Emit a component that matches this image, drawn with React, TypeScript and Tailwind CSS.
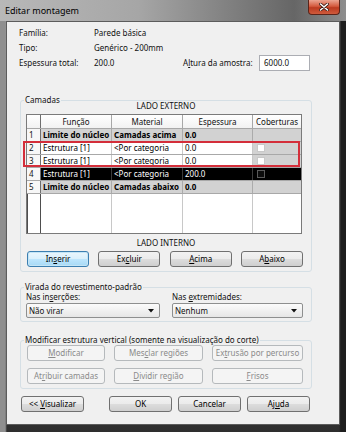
import React from "react";

type BtnProps = { children: React.ReactNode; className?: string; kind?: "normal" | "focus" | "disabled" };

function Btn({ children, className = "", kind = "normal" }: BtnProps) {
  const base = "h-[16px] rounded-[3px] border flex items-center justify-center shrink-0 ";
  const k =
    kind === "focus"
      ? "border-[#3c7fb1] bg-[linear-gradient(#eaf6fd,#d9f0fc_50%,#bee6fd_50%,#a7d9f5)] text-black shadow-[inset_0_0_0_1px_#c4e5f6]"
      : kind === "disabled"
      ? "border-[#b5b9bc] bg-[#f4f4f4] text-[#8a8a8a]"
      : "border-[#707070] bg-[linear-gradient(#f2f2f2,#ebebeb_50%,#dddddd_50%,#cfcfcf)] text-black";
  return <div className={base + k + " " + className}>{children}</div>;
}

type RowKind = "grey" | "white" | "black";

function Row({ n, a, b, c, kind }: { n: string; a: string; b: string; c: string; kind: RowKind }) {
  const cell =
    kind === "grey"
      ? "bg-[#d2d2d2] font-bold text-black border-r border-[#ababab]"
      : kind === "black"
      ? "bg-black text-white border-r border-[#3a3a3a]"
      : "bg-white text-black border-r border-[#c8c8c8]";
  const cob = kind === "black" ? "bg-black" : "bg-[#d2d2d2]";
  return (
    <div className="h-[13px] flex border-b border-[#a8a8a8]">
      <div className="w-[14px] shrink-0 bg-[#f7f7f7] border-r border-[#6e6e6e] pl-[2px] flex items-center">{n}</div>
      <div className={"w-[71px] shrink-0 pl-[2px] flex items-center whitespace-nowrap overflow-hidden " + cell}>{a}</div>
      <div className={"w-[71px] shrink-0 pl-[2px] flex items-center whitespace-nowrap overflow-hidden " + cell}>{b}</div>
      <div className={"w-[70px] shrink-0 pl-[2px] flex items-center whitespace-nowrap overflow-hidden " + cell}>{c}</div>
      <div className={"flex-1 flex items-center pl-[4px] " + cob}>
        {kind === "white" && <div className="w-[8px] h-[8px] bg-white border border-[#c9c9c9]" />}
        {kind === "black" && <div className="w-[8px] h-[8px] bg-[#0c0c0c] border border-[#5a5a5a]" />}
      </div>
    </div>
  );
}

export default function App() {
  return (
    <div className="w-[346px] h-[432px] overflow-hidden flex flex-col bg-[linear-gradient(90deg,#8f8f8f,#8f8f8f_1.5%,transparent_2%,transparent_98%,#1e1e1e_98.5%),linear-gradient(180deg,#a4a4a4,#6e6e6e_55%,#2e2e2e)] [font-family:'Noto_Sans',sans-serif] text-[8px] leading-[10px] text-[#111]">
      {/* title bar */}
      <div className="h-[21px] shrink-0 flex bg-[linear-gradient(90deg,#b8b8b8,#a6a6a6_40%,#7b7b7b_70%,#666666_85%,#8e8e8e)]">
        <div className="flex-1 pl-[5px] pt-[5px] text-[9px] leading-[11px] text-black">Editar montagem</div>
        <div className="mr-[6px] w-[32px] h-[15px] rounded-b-[4px] border border-t-0 border-[#5b2419] bg-[linear-gradient(#eba491,#d45a3e_45%,#bb3a20_55%,#cf5b3c)] flex items-center justify-center">
          <svg width="10" height="8" viewBox="0 0 10 8">
            <path d="M1.5 1 L8.5 7 M8.5 1 L1.5 7" stroke="#3a1a12" strokeWidth="3" strokeLinecap="round" />
            <path d="M1.5 1 L8.5 7 M8.5 1 L1.5 7" stroke="#ffffff" strokeWidth="1.6" strokeLinecap="round" />
          </svg>
        </div>
      </div>

      {/* client area */}
      <div className="mx-[6px] h-[404px] shrink-0 bg-[#f0f0f0] border border-[#5c5c5c] flex flex-col">
        {/* info */}
        <div className="mt-[3px] pl-[12px] flex flex-col">
          <div className="h-[15px] flex items-center">
            <span className="w-[75px] shrink-0">Família:</span>
            <span>Parede básica</span>
          </div>
          <div className="h-[15px] flex items-center">
            <span className="w-[75px] shrink-0">Tipo:</span>
            <span>Genérico - 200mm</span>
          </div>
          <div className="h-[15px] flex items-center">
            <span className="w-[75px] shrink-0">Espessura total:</span>
            <span className="w-[89px] shrink-0">200.0</span>
            <span className="w-[76px] shrink-0">
              A<u>l</u>tura da amostra:
            </span>
            <div className="w-[51px] h-[16px] border border-[#abadb3] bg-white pl-[4px] flex items-center">6000.0</div>
          </div>
        </div>

        {/* Camadas */}
        <fieldset className="mt-[25px] ml-[13px] w-[292px] border border-[#d5dfe5] rounded-[3px] pb-[4px]">
          <legend className="ml-[3px] px-[1px] leading-[10px]">Camadas</legend>
          <div className="-mt-[4px] h-[10px] text-center">LADO EXTERNO</div>
          <div className="relative ml-[5px] mt-[3px] w-[276px] h-[120px] border border-[#7a7a7a] bg-white flex flex-col">
            <div className="h-[14px] flex border-b border-[#a8a8a8] bg-[linear-gradient(#ffffff,#f2f2f2)]">
              <div className="w-[14px] shrink-0 border-r border-[#6e6e6e]" />
              <div className="w-[71px] shrink-0 border-r border-[#a8a8a8] flex items-center justify-center">Função</div>
              <div className="w-[71px] shrink-0 border-r border-[#a8a8a8] flex items-center justify-center">Material</div>
              <div className="w-[70px] shrink-0 border-r border-[#a8a8a8] flex items-center justify-center">Espessura</div>
              <div className="flex-1 flex items-center justify-center">Coberturas</div>
            </div>
            <Row n="1" a="Limite do núcleo" b="Camadas acima" c="0.0" kind="grey" />
            <Row n="2" a="Estrutura [1]" b="<Por categoria" c="0.0" kind="white" />
            <Row n="3" a="Estrutura [1]" b="<Por categoria" c="0.0" kind="white" />
            <Row n="4" a="Estrutura [1]" b="<Por categoria" c="200.0" kind="black" />
            <Row n="5" a="Limite do núcleo" b="Camadas abaixo" c="0.0" kind="grey" />
            <div className="flex-1 flex">
              <div className="w-[14px] shrink-0 bg-white border-r border-l border-[#4e4e4e]" />
              <div className="w-[71px] shrink-0 border-r border-[#c8c8c8]" />
              <div className="w-[71px] shrink-0 border-r border-[#c8c8c8]" />
              <div className="w-[70px] shrink-0 border-r border-[#c8c8c8]" />
              <div className="flex-1" />
            </div>
            <div className="absolute left-[-4px] top-[26px] w-[277px] h-[26px] border-2 border-[#d42e3a]" />
          </div>
          <div className="mt-[4px] h-[10px] text-center">LADO INTERNO</div>
          <div className="mt-[3px] ml-[6px] w-[276px] flex justify-between">
            <Btn kind="focus" className="w-[62px]">
              In<u>s</u>erir
            </Btn>
            <Btn className="w-[62px]">
              Ex<u>c</u>luir
            </Btn>
            <Btn className="w-[62px]">
              <u>A</u>cima
            </Btn>
            <Btn className="w-[62px]">
              A<u>b</u>aixo
            </Btn>
          </div>
        </fieldset>

        {/* Virada */}
        <fieldset className="mt-[10px] ml-[13px] w-[292px] border border-[#d5dfe5] rounded-[3px] pb-[3px]">
          <legend className="ml-[3px] px-[1px] leading-[10px]">Virada do revestimento-padrão</legend>
          <div className="pl-[5px] flex gap-[12px]">
            <div className="w-[134px] flex flex-col">
              <div className="h-[10px]">
                Nas in<u>s</u>erções:
              </div>
              <div className="mt-[1px] h-[15px] rounded-[2px] border border-[#8e8f8f] bg-[linear-gradient(#fbfbfb,#f1f1f1_50%,#e6e6e6)] flex items-center justify-between pl-[2px] pr-[5px]">
                <span>Não virar</span>
                <svg width="6" height="4" viewBox="0 0 6 4"><path d="M0 0 L6 0 L3 3.5 Z" fill="#111" /></svg>
              </div>
            </div>
            <div className="w-[131px] flex flex-col">
              <div className="h-[10px]">
                Nas <u>e</u>xtremidades:
              </div>
              <div className="mt-[1px] h-[15px] rounded-[2px] border border-[#8e8f8f] bg-[linear-gradient(#fbfbfb,#f1f1f1_50%,#e6e6e6)] flex items-center justify-between pl-[2px] pr-[5px]">
                <span>Nenhum</span>
                <svg width="6" height="4" viewBox="0 0 6 4"><path d="M0 0 L6 0 L3 3.5 Z" fill="#111" /></svg>
              </div>
            </div>
          </div>
        </fieldset>

        {/* Modificar estrutura vertical */}
        <fieldset className="mt-[13px] ml-[13px] w-[292px] border border-[#d5dfe5] rounded-[3px] pb-[4px]">
          <legend className="ml-[3px] px-[1px] leading-[10px]">Modificar estrutura vertical (somente na visualização do corte)</legend>
          <div className="pl-[6px] flex flex-col gap-[7px]">
            <div className="flex gap-[9px]">
              <Btn kind="disabled" className="w-[78px] h-[15px]">
                <u>M</u>odificar
              </Btn>
              <Btn kind="disabled" className="w-[89px] h-[15px]">
                Mes<u>c</u>lar regiões
              </Btn>
              <Btn kind="disabled" className="w-[91px] h-[15px]">
                Ex<u>t</u>rusão por percurso
              </Btn>
            </div>
            <div className="flex gap-[9px]">
              <Btn kind="disabled" className="w-[78px] h-[15px]">
                At<u>r</u>ibuir camadas
              </Btn>
              <Btn kind="disabled" className="w-[89px] h-[15px]">
                <u>D</u>ividir região
              </Btn>
              <Btn kind="disabled" className="w-[91px] h-[15px]">
                <u>F</u>risos
              </Btn>
            </div>
          </div>
        </fieldset>

        {/* bottom buttons */}
        <div className="mt-[7px] ml-[14px] flex">
          <Btn className="w-[63px]">
            &lt;&lt; <u className="ml-[2px]">V</u>isualizar
          </Btn>
          <Btn className="w-[63px] ml-[25px]">OK</Btn>
          <Btn className="w-[63px] ml-[6px]">Cancelar</Btn>
          <Btn className="w-[63px] ml-[6px]">
            Aj<u>u</u>da
          </Btn>
        </div>
      </div>
    </div>
  );
}
